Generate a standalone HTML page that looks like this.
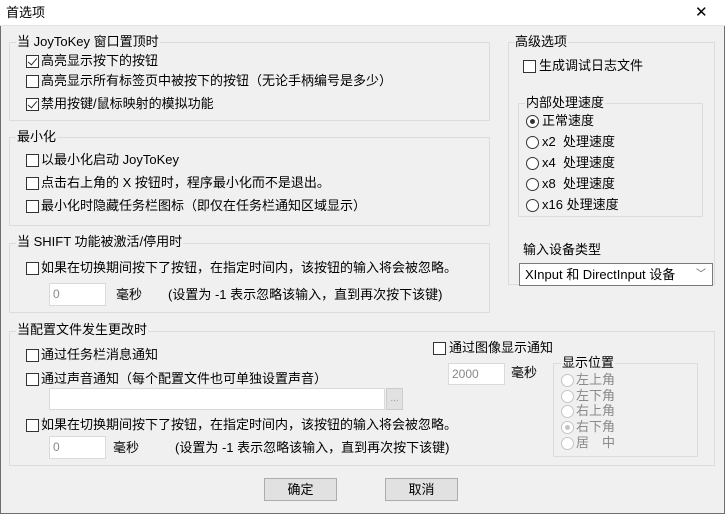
<!DOCTYPE html>
<html><head><meta charset="utf-8"><style>
*{box-sizing:border-box;margin:0;padding:0}
body{width:725px;height:514px;overflow:hidden;background:#f0f0f0;font-family:"Liberation Sans","Noto Sans CJK SC",sans-serif;font-size:13px;color:#000;position:relative}
.win{position:absolute;left:0;top:0;width:725px;height:514px;border:1px solid #6e6e6e;border-top:none}
.title{position:absolute;left:0;top:0;width:725px;height:26px;background:#fff;border-bottom:1px solid #e4e4e4}
.t{position:absolute;white-space:nowrap;line-height:16px}
.g{position:absolute;border:1px solid #dcdcdc}
.gl{position:absolute;background:#f0f0f0;padding:0 1px;line-height:16px;white-space:nowrap}
.cb{position:absolute;width:13px;height:13px;border:1px solid #333;background:#fff}
.cb.on::after{content:"";position:absolute;left:3px;top:0px;width:4px;height:8px;border-right:1.5px solid #333;border-bottom:1.5px solid #333;transform:rotate(40deg)}
.rb{position:absolute;width:13px;height:13px;border:1px solid #333;border-radius:50%;background:#fff}
.rb.on::after{content:"";position:absolute;left:3px;top:3px;width:5px;height:5px;border-radius:50%;background:#333}
.rb.dis{border-color:#c4c4c4}
.rb.dis.on::after{background:#c4c4c4}
.in{position:absolute;background:#fff;border:1px solid #dadada;color:#888;padding-left:3px;line-height:20px;font-size:12px}
.btn{position:absolute;border:1px solid #adadad;background:#e1e1e1;text-align:center;line-height:21px}
.dis{color:#8a8a8a}
</style></head><body>
<div class="win"></div>
<div class="title"></div>
<div class="t" style="left:6px;top:5px">首选项</div>
<div style="position:absolute;left:695px;top:6px;font-size:15px;line-height:14px">✕</div>

<!-- G1 -->
<div class="g" style="left:9px;top:42px;width:481px;height:79px"></div>
<div class="gl" style="left:16px;top:34px">当 JoyToKey 窗口置顶时</div>
<div class="cb on" style="left:26px;top:55px"></div><div class="t" style="left:41px;top:53px">高亮显示按下的按钮</div>
<div class="cb" style="left:26px;top:75px"></div><div class="t" style="left:41px;top:73px">高亮显示所有标签页中被按下的按钮（无论手柄编号是多少）</div>
<div class="cb on" style="left:26px;top:98px"></div><div class="t" style="left:41px;top:96px">禁用按键/鼠标映射的模拟功能</div>

<!-- G2 -->
<div class="g" style="left:9px;top:137px;width:481px;height:89px"></div>
<div class="gl" style="left:16px;top:129px">最小化</div>
<div class="cb" style="left:26px;top:154px"></div><div class="t" style="left:41px;top:152px">以最小化启动 JoyToKey</div>
<div class="cb" style="left:26px;top:177px"></div><div class="t" style="left:41px;top:175px">点击右上角的 X 按钮时，程序最小化而不是退出。</div>
<div class="cb" style="left:26px;top:200px"></div><div class="t" style="left:41px;top:198px">最小化时隐藏任务栏图标（即仅在任务栏通知区域显示）</div>

<!-- G3 -->
<div class="g" style="left:9px;top:243px;width:481px;height:70px"></div>
<div class="gl" style="left:16px;top:234px">当 SHIFT 功能被激活/停用时</div>
<div class="cb" style="left:26px;top:262px"></div><div class="t" style="left:41px;top:260px">如果在切换期间按下了按钮，在指定时间内，该按钮的输入将会被忽略。</div>
<div class="in" style="left:49px;top:283px;width:57px;height:23px">0</div>
<div class="t" style="left:116px;top:287px">毫秒</div>
<div class="t" style="left:168px;top:287px">(设置为 -1 表示忽略该输入，直到再次按下该键)</div>

<!-- G4 -->
<div class="g" style="left:9px;top:331px;width:706px;height:135px"></div>
<div class="gl" style="left:16px;top:322px">当配置文件发生更改时</div>
<div class="cb" style="left:26px;top:349px"></div><div class="t" style="left:41px;top:347px">通过任务栏消息通知</div>
<div class="cb" style="left:26px;top:373px"></div><div class="t" style="left:41px;top:371px">通过声音通知（每个配置文件也可单独设置声音）</div>
<div class="in" style="left:49px;top:388px;width:336px;height:22px"></div>
<div style="position:absolute;left:386px;top:388px;width:17px;height:22px;background:#e1e1e1;border:1px solid #ccc;color:#999;font-size:10px;text-align:center;line-height:20px">...</div>
<div class="cb" style="left:26px;top:419px"></div><div class="t" style="left:41px;top:417px">如果在切换期间按下了按钮，在指定时间内，该按钮的输入将会被忽略。</div>
<div class="in" style="left:49px;top:436px;width:57px;height:23px">0</div>
<div class="t" style="left:113px;top:440px">毫秒</div>
<div class="t" style="left:175px;top:440px">(设置为 -1 表示忽略该输入，直到再次按下该键)</div>

<div class="cb" style="left:433px;top:342px"></div><div class="t" style="left:449px;top:340px">通过图像显示通知</div>
<div class="in" style="left:448px;top:363px;width:57px;height:22px">2000</div>
<div class="t" style="left:511px;top:365px">毫秒</div>
<div class="g" style="left:553px;top:363px;width:145px;height:94px"></div>
<div class="gl" style="left:561px;top:355px">显示位置</div>
<div class="rb dis" style="left:561px;top:374px"></div><div class="t dis" style="left:576px;top:372px">左上角</div>
<div class="rb dis" style="left:561px;top:390px"></div><div class="t dis" style="left:576px;top:388px">左下角</div>
<div class="rb dis" style="left:561px;top:405px"></div><div class="t dis" style="left:576px;top:403px">右上角</div>
<div class="rb dis on" style="left:561px;top:421px"></div><div class="t dis" style="left:576px;top:419px">右下角</div>
<div class="rb dis" style="left:561px;top:437px"></div><div class="t dis" style="left:576px;top:435px">居　中</div>

<!-- right -->
<div class="g" style="left:508px;top:42px;width:207px;height:243px"></div>
<div class="gl" style="left:514px;top:34px">高级选项</div>
<div class="cb" style="left:523px;top:60px"></div><div class="t" style="left:539px;top:58px">生成调试日志文件</div>
<div class="g" style="left:518px;top:103px;width:185px;height:114px"></div>
<div class="gl" style="left:525px;top:95px">内部处理速度</div>
<div class="rb on" style="left:526px;top:115px"></div><div class="t" style="left:542px;top:113px">正常速度</div>
<div class="rb" style="left:526px;top:136px"></div><div class="t" style="left:542px;top:134px">x2&nbsp;&nbsp;处理速度</div>
<div class="rb" style="left:526px;top:157px"></div><div class="t" style="left:542px;top:155px">x4&nbsp;&nbsp;处理速度</div>
<div class="rb" style="left:526px;top:178px"></div><div class="t" style="left:542px;top:176px">x8&nbsp;&nbsp;处理速度</div>
<div class="rb" style="left:526px;top:199px"></div><div class="t" style="left:542px;top:197px">x16 处理速度</div>
<div class="t" style="left:523px;top:242px">输入设备类型</div>
<div style="position:absolute;left:519px;top:263px;width:194px;height:23px;background:#fff;border:1px solid #7a7a7a;padding-left:5px;line-height:21px">XInput 和 DirectInput 设备<span style="position:absolute;right:6px;top:0;color:#555;font-size:10px">﹀</span></div>

<div class="btn" style="left:264px;top:478px;width:73px;height:23px">确定</div>
<div class="btn" style="left:385px;top:478px;width:73px;height:23px">取消</div>
</body></html>
